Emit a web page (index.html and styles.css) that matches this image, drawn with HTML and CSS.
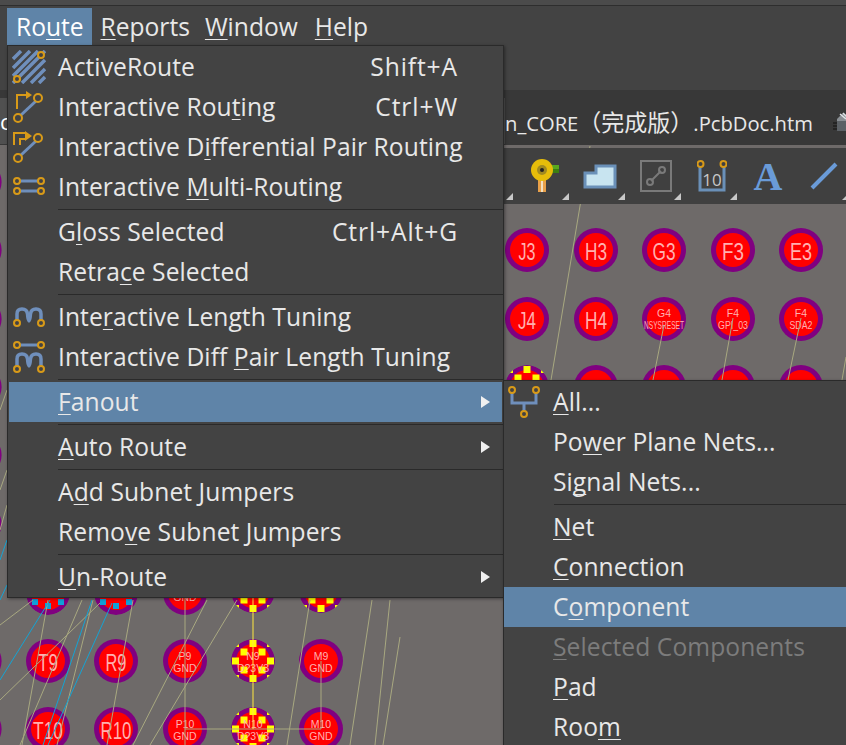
FILE: index.html

```html
<!DOCTYPE html>
<html lang="en">
<head>
  <meta charset="UTF-8" />
  <title>Route menu</title>
  <link rel="stylesheet" href="styles.css">
</head>
<body>
  <div class="top-strip"></div>
  <div class="menubar">
    <span class="menubar-item active">Ro<u>u</u>te</span>
    <span class="menubar-item reports"><u>R</u>eports</span>
    <span class="menubar-item"><u>W</u>indow</span>
    <span class="menubar-item"><u>H</u>elp</span>
  </div>
  <div class="tabs">
    <div class="tab-open">c</div>
    <div class="tab-name">n_CORE<span class="tab-cjk">（完成版）</span>.PcbDoc.htm</div>
    <svg class="tab-icon" width="16" height="24" viewBox="0 0 16 24">
      <path d="M4 8 L10 2 L16 6 V20 H4 Z" fill="#8a8f94"/>
      <path d="M4 10 H16 V20 H4 Z" fill="#5c6166"/>
      <path d="M7 3 L13 8 M10 2 L15 7" stroke="#dfe3e6" stroke-width="1.5"/>
      <path d="M0 12 H4 M0 15 H4 M0 18 H4" stroke="#111" stroke-width="1"/>
    </svg>
  </div>

  <div class="board">
    <svg class="board-svg" width="846" height="600" viewBox="0 145 846 600">
      <defs>
        <g id="pad">
          <circle r="22" fill="#800080"/>
          <circle r="17" fill="#ff0000"/>
        </g>
        <clipPath id="pad-clip"><circle r="22"/></clipPath>
        <g id="pad-yellow" clip-path="url(#pad-clip)" fill="#ffff00">
          <circle r="22" fill="#800080"/>
          <circle r="17" fill="#ff0000"/>
          <rect x="-3.5" y="-21" width="7" height="7"/>
          <rect x="-12.5" y="-12.5" width="7" height="7"/>
          <rect x="5.5" y="-12.5" width="7" height="7"/>
          <rect x="-21" y="-3.5" width="7" height="7"/>
          <rect x="14" y="-3.5" width="7" height="7"/>
          <rect x="-12.5" y="5.5" width="7" height="7"/>
          <rect x="5.5" y="5.5" width="7" height="7"/>
          <rect x="-3.5" y="14" width="7" height="7"/>
          <rect x="-21" y="-21" width="7" height="7"/>
          <rect x="14" y="-21" width="7" height="7"/>
          <rect x="-21" y="14" width="7" height="7"/>
          <rect x="14" y="14" width="7" height="7"/>
        </g>
        <g id="pad-blue" clip-path="url(#pad-clip)" fill="#12a0d8">
          <circle r="22" fill="#800080"/>
          <circle r="17" fill="#ff0000"/>
          <rect x="-16" y="6" width="6" height="6"/>
          <rect x="-3" y="10" width="6" height="6"/>
          <rect x="10" y="6" width="6" height="6"/>
        </g>
      </defs>

      <!-- left edge column -->
      <use href="#pad" x="-20.4" y="182"/>
      <use href="#pad" x="-20.4" y="250"/>
      <use href="#pad" x="-20.4" y="319"/>
      <use href="#pad" x="-20.4" y="387"/>
      <use href="#pad" x="-20.4" y="455"/>
      <use href="#pad" x="-20.4" y="524"/>
      <use href="#pad" x="-20.4" y="661"/>
      <use href="#pad" x="-20.4" y="729"/>

      <!-- rows 3 to 5 -->
      <use href="#pad" x="527" y="250"/>
      <use href="#pad" x="596" y="250"/>
      <use href="#pad" x="664" y="250"/>
      <use href="#pad" x="733" y="250"/>
      <use href="#pad" x="801" y="250"/>
      <use href="#pad" x="527" y="319"/>
      <use href="#pad" x="596" y="319"/>
      <use href="#pad" x="664" y="319"/>
      <use href="#pad" x="733" y="319"/>
      <use href="#pad" x="801" y="319"/>
      <use href="#pad-yellow" x="527" y="387"/>
      <use href="#pad" x="596" y="387"/>
      <use href="#pad" x="664" y="387"/>
      <use href="#pad" x="733" y="387"/>
      <use href="#pad" x="801" y="387"/>

      <text class="pad-big" x="527" y="260" textLength="17" lengthAdjust="spacingAndGlyphs">J3</text>
      <text class="pad-big" x="596" y="260" textLength="22" lengthAdjust="spacingAndGlyphs">H3</text>
      <text class="pad-big" x="664" y="260" textLength="23" lengthAdjust="spacingAndGlyphs">G3</text>
      <text class="pad-big" x="733" y="260" textLength="22" lengthAdjust="spacingAndGlyphs">F3</text>
      <text class="pad-big" x="801" y="260" textLength="22" lengthAdjust="spacingAndGlyphs">E3</text>
      <text class="pad-big" x="527" y="329" textLength="18" lengthAdjust="spacingAndGlyphs">J4</text>
      <text class="pad-big" x="596" y="329" textLength="22" lengthAdjust="spacingAndGlyphs">H4</text>
      <text class="pad-small" x="664" y="317">G4</text>
      <text class="pad-small" x="664" y="329" textLength="40" lengthAdjust="spacingAndGlyphs">NSYSRESET</text>
      <text class="pad-small" x="733" y="317">F4</text>
      <text class="pad-small" x="733" y="329" textLength="30" lengthAdjust="spacingAndGlyphs">GPI_03</text>
      <text class="pad-small" x="801" y="317">F4</text>
      <text class="pad-small" x="801" y="329" textLength="23" lengthAdjust="spacingAndGlyphs">SDA2</text>

      <!-- rows 8 to 10 -->
      <use href="#pad-blue" x="48" y="593"/>
      <use href="#pad-blue" x="116" y="593"/>
      <use href="#pad" x="185" y="593"/>
      <use href="#pad-yellow" x="253" y="591"/>
      <use href="#pad-yellow" x="321" y="591"/>
      <use href="#pad" x="48" y="661"/>
      <use href="#pad" x="116" y="661"/>
      <use href="#pad" x="185" y="661"/>
      <use href="#pad-yellow" x="253" y="661"/>
      <use href="#pad" x="321" y="661"/>
      <use href="#pad" x="48" y="729"/>
      <use href="#pad" x="116" y="729"/>
      <use href="#pad" x="185" y="729"/>
      <use href="#pad-yellow" x="253" y="729"/>
      <use href="#pad" x="321" y="729"/>

      <text class="pad-big" x="48" y="671" textLength="20" lengthAdjust="spacingAndGlyphs">T9</text>
      <text class="pad-big" x="116" y="671" textLength="21" lengthAdjust="spacingAndGlyphs">R9</text>
      <text class="pad-big" x="48" y="739" textLength="30" lengthAdjust="spacingAndGlyphs">T10</text>
      <text class="pad-big" x="116" y="739" textLength="31" lengthAdjust="spacingAndGlyphs">R10</text>
      <text class="pad-small" x="185" y="601">GND</text>
      <text class="pad-small" x="185" y="660">P9</text>
      <text class="pad-small" x="185" y="672">GND</text>
      <text class="pad-small" x="253" y="660">N9</text>
      <text class="pad-small" x="253" y="672">D?3V3</text>
      <text class="pad-small" x="321" y="660">M9</text>
      <text class="pad-small" x="321" y="672">GND</text>
      <text class="pad-small" x="185" y="728">P10</text>
      <text class="pad-small" x="185" y="740">GND</text>
      <text class="pad-small" x="253" y="728">N10</text>
      <text class="pad-small" x="253" y="740">D?3V3</text>
      <text class="pad-small" x="321" y="728">M10</text>
      <text class="pad-small" x="321" y="740">GND</text>

      <!-- ratsnest -->
      <g class="net">
        <path d="M590 146 L551 380"/>
        <path d="M664 325 L653 380"/>
        <path d="M733 318 L722 380"/>
        <path d="M801 318 L788 380"/>
        <path d="M846 357 L842 380"/>
        <path d="M185 598 V745"/>
        <path d="M321 661 V729"/>
        <path d="M185 729 H321"/>
        <path d="M207 600 L133 745"/>
        <path d="M237 600 L150 745"/>
        <path d="M310 600 L287 745"/>
        <path d="M372 600 L350 745"/>
        <path d="M390 600 L375 745"/>
        <path d="M400 637 L383 745"/>
        <path d="M133 600 L107 745"/>
        <path d="M33 600 L0 625"/>
        <path d="M48 600 L22 745"/>
        <path d="M82 600 L20 745"/>
        <path d="M93 600 L57 745"/>
        <path d="M100 603 L0 700"/>
        <path d="M7 470 L0 490"/>
        <path d="M7 505 L0 530"/>
        <path d="M7 390 L0 410"/>
      </g>
      <g class="net-cyan">
        <path d="M50 600 L0 680"/>
        <path d="M92 600 L43 745"/>
        <path d="M112 603 L48 745"/>
        <path d="M7 540 L0 560"/>
        <path d="M7 585 L0 600"/>
      </g>
      <path class="net-yellow" d="M253 598 V729"/>
    </svg>

    <div class="toolbar">
      <div class="tool"></div>
      <div class="tool">
        <svg width="32" height="34" viewBox="0 0 32 34">
          <rect x="22" y="6" width="9" height="4" fill="#5aa81e"/>
          <rect x="22" y="10" width="9" height="4" fill="#3c7e12"/>
          <rect x="10" y="20" width="8" height="13" fill="#e8a04a"/>
          <rect x="13" y="20" width="2" height="13" fill="#f4e0c0"/>
          <circle cx="14" cy="11" r="11" fill="#e6bd0a"/>
          <circle cx="14" cy="11" r="5" fill="#a08a20"/>
          <circle cx="14" cy="11" r="2" fill="#222"/>
        </svg>
      </div>
      <div class="tool">
        <svg width="34" height="26" viewBox="0 0 34 26">
          <path d="M2 24 V10 H13 V3 H32 V24 Z" fill="#c8e4f0" stroke="#6a90b8" stroke-width="3"/>
        </svg>
      </div>
      <div class="tool">
        <svg width="32" height="32" viewBox="0 0 32 32">
          <rect x="1" y="1" width="30" height="30" fill="none" stroke="#7a7a7a" stroke-width="2"/>
          <path d="M11 21 L21 11" stroke="#7a7a7a" stroke-width="2"/>
          <circle cx="10" cy="22" r="3" fill="none" stroke="#7a7a7a" stroke-width="2"/>
          <circle cx="22" cy="10" r="3" fill="none" stroke="#7a7a7a" stroke-width="2"/>
        </svg>
      </div>
      <div class="tool">
        <svg width="30" height="32" viewBox="0 0 30 32">
          <path d="M3 7 V30 H27 V7" fill="none" stroke="#6a90b8" stroke-width="3"/>
          <circle cx="3.5" cy="4" r="3" fill="none" stroke="#d89a18" stroke-width="2"/>
          <circle cx="26.5" cy="4" r="3" fill="none" stroke="#d89a18" stroke-width="2"/>
          <text class="dim-text" x="15" y="26">10</text>
        </svg>
      </div>
      <div class="tool plain"><span class="tool-a">A</span></div>
      <div class="tool">
        <svg width="28" height="28" viewBox="0 0 28 28">
          <path d="M2 26 L26 2" stroke="#6a9bd8" stroke-width="4"/>
        </svg>
      </div>
    </div>
  </div>

  <div class="menu main-menu">
    <div class="row">
      <span class="ico">
        <svg width="34" height="34" viewBox="0 0 34 34">
          <path d="M1 9 L9 1 M1 18 L18 1 M1 26 L26 1 M1 33 L33 1 M10 33 L33 10 M19 33 L33 19 M27 33 L33 27" stroke="#6f8fbc" stroke-width="3.5"/>
          <circle cx="29" cy="5" r="3" fill="#434343" stroke="#d89a18" stroke-width="2"/>
          <circle cx="5" cy="29" r="3" fill="#434343" stroke="#d89a18" stroke-width="2"/>
        </svg>
      </span>
      <span class="label">ActiveRoute</span><span class="keys">Shift+A</span>
    </div>
    <div class="row">
      <span class="ico">
        <svg width="34" height="34" viewBox="0 0 34 34">
          <path d="M9 25 L24 11" stroke="#6f8fbc" stroke-width="3"/>
          <path d="M5 19 V5 H15" fill="none" stroke="#d89a18" stroke-width="2"/>
          <path d="M14 1 L20 5 L14 9 Z" fill="#d89a18"/>
          <circle cx="6" cy="28" r="4" fill="none" stroke="#d89a18" stroke-width="2"/>
          <circle cx="26" cy="8" r="4" fill="none" stroke="#d89a18" stroke-width="2"/>
        </svg>
      </span>
      <span class="label">Interactive Rou<u>t</u>ing</span><span class="keys">Ctrl+W</span>
    </div>
    <div class="row">
      <span class="ico">
        <svg width="34" height="34" viewBox="0 0 34 34">
          <path d="M9 25 L24 11" stroke="#6f8fbc" stroke-width="3"/>
          <path d="M2 15 V3 H14 M8 15 V9 H14" fill="none" stroke="#d89a18" stroke-width="2"/>
          <path d="M13 1 L20 6 L13 11 Z" fill="#d89a18"/>
          <circle cx="6" cy="28" r="4" fill="none" stroke="#d89a18" stroke-width="2"/>
          <circle cx="26" cy="8" r="4" fill="none" stroke="#d89a18" stroke-width="2"/>
        </svg>
      </span>
      <span class="label">Interactive D<u>i</u>fferential Pair Routing</span>
    </div>
    <div class="row">
      <span class="ico">
        <svg width="34" height="34" viewBox="0 0 34 34">
          <path d="M8 11 H26 M8 21 H26" stroke="#6f8fbc" stroke-width="3"/>
          <circle cx="5" cy="11" r="3" fill="none" stroke="#d89a18" stroke-width="2"/>
          <circle cx="29" cy="11" r="3" fill="none" stroke="#d89a18" stroke-width="2"/>
          <circle cx="5" cy="21" r="3" fill="none" stroke="#d89a18" stroke-width="2"/>
          <circle cx="29" cy="21" r="3" fill="none" stroke="#d89a18" stroke-width="2"/>
        </svg>
      </span>
      <span class="label">Interactive <u>M</u>ulti-Routing</span>
    </div>
    <div class="sep"></div>
    <div class="row"><span class="ico"></span><span class="label">G<u>l</u>oss Selected</span><span class="keys">Ctrl+Alt+G</span></div>
    <div class="row"><span class="ico"></span><span class="label">Retra<u>c</u>e Selected</span></div>
    <div class="sep"></div>
    <div class="row">
      <span class="ico">
        <svg width="34" height="34" viewBox="0 0 34 34">
          <path d="M5 21 V14 Q5 9 10 9 Q15 9 15.5 14 Q16 21 17 21 Q18 21 18.5 14 Q19 9 24 9 Q29 9 29 14 V21" fill="none" stroke="#6f8fbc" stroke-width="3.5"/>
          <circle cx="5" cy="23" r="3" fill="#434343" stroke="#d89a18" stroke-width="2"/>
          <circle cx="29" cy="23" r="3" fill="#434343" stroke="#d89a18" stroke-width="2"/>
        </svg>
      </span>
      <span class="label">Inte<u>r</u>active Length Tuning</span>
    </div>
    <div class="row">
      <span class="ico">
        <svg width="34" height="34" viewBox="0 0 34 34">
          <path d="M8 5 H26" stroke="#6f8fbc" stroke-width="3"/>
          <path d="M5 27 V19 Q5 14 10 14 Q15 14 15.5 19 Q16 26 17 26 Q18 26 18.5 19 Q19 14 24 14 Q29 14 29 19 V27" fill="none" stroke="#6f8fbc" stroke-width="3.5"/>
          <circle cx="5" cy="5" r="3" fill="#434343" stroke="#d89a18" stroke-width="2"/>
          <circle cx="29" cy="5" r="3" fill="#434343" stroke="#d89a18" stroke-width="2"/>
          <circle cx="5" cy="29" r="3" fill="#434343" stroke="#d89a18" stroke-width="2"/>
          <circle cx="29" cy="29" r="3" fill="#434343" stroke="#d89a18" stroke-width="2"/>
        </svg>
      </span>
      <span class="label">Interactive Diff <u>P</u>air Length Tuning</span>
    </div>
    <div class="sep"></div>
    <div class="row hover"><span class="ico"></span><span class="label"><u>F</u>anout</span><span class="arrow"></span></div>
    <div class="sep"></div>
    <div class="row"><span class="ico"></span><span class="label"><u>A</u>uto Route</span><span class="arrow"></span></div>
    <div class="sep"></div>
    <div class="row"><span class="ico"></span><span class="label">A<u>d</u>d Subnet Jumpers</span></div>
    <div class="row"><span class="ico"></span><span class="label">Remo<u>v</u>e Subnet Jumpers</span></div>
    <div class="sep"></div>
    <div class="row"><span class="ico"></span><span class="label"><u>U</u>n-Route</span><span class="arrow"></span></div>
  </div>

  <div class="menu sub-menu">
    <div class="row">
      <span class="ico">
        <svg width="34" height="34" viewBox="0 0 34 34">
          <path d="M4 6 V18 H28 V6 M16 18 V27" fill="none" stroke="#6f8fbc" stroke-width="3"/>
          <circle cx="4" cy="5" r="3" fill="#434343" stroke="#d89a18" stroke-width="2"/>
          <circle cx="28" cy="5" r="3" fill="#434343" stroke="#d89a18" stroke-width="2"/>
          <circle cx="16" cy="29" r="3" fill="#434343" stroke="#d89a18" stroke-width="2"/>
        </svg>
      </span>
      <span class="label"><u>A</u>ll...</span>
    </div>
    <div class="row"><span class="ico"></span><span class="label">Po<u>w</u>er Plane Nets...</span></div>
    <div class="row"><span class="ico"></span><span class="label">Si<u>g</u>nal Nets...</span></div>
    <div class="sep"></div>
    <div class="row"><span class="ico"></span><span class="label"><u>N</u>et</span></div>
    <div class="row"><span class="ico"></span><span class="label"><u>C</u>onnection</span></div>
    <div class="row hover"><span class="ico"></span><span class="label">C<u>o</u>mponent</span></div>
    <div class="row disabled"><span class="ico"></span><span class="label"><u>S</u>elected Components</span></div>
    <div class="row"><span class="ico"></span><span class="label"><u>P</u>ad</span></div>
    <div class="row"><span class="ico"></span><span class="label">Roo<u>m</u></span></div>
  </div>
</body>
</html>
```

FILE: styles.css

```css
html, body {
  margin: 0;
  height: 745px;
  overflow: hidden;
}
body {
  position: relative;
  background: #434343;
  color: #e8e8e8;
  font-family: 'Open Sans', 'Noto Sans CJK SC', sans-serif;
  font-size: 24.6px;
  letter-spacing: 0.08px;
}
u {
  text-decoration-thickness: 1px;
  text-decoration-skip-ink: none;
  text-underline-offset: 3px;
}
.top-strip {
  height: 5px;
  background: #4b4b4b;
  border-bottom: 1px solid #2e2e2e;
}
.menubar {
  height: 84px;
  display: flex;
  align-items: flex-start;
  padding: 2px 0 0 7px;
  box-sizing: border-box;
}
.menubar-item {
  height: 37px;
  line-height: 37px;
  padding: 0 8.5px;
  letter-spacing: 0;
}
.menubar-item.reports {
  padding-right: 6.5px;
}
.menubar-item.active {
  width: 85px;
  box-sizing: border-box;
  padding: 0 0 0 9px;
  background: #5f84a8;
  color: #fff;
}
.tabs {
  height: 55px;
  display: flex;
  background: #383838;
  position: relative;
}
.tab-open {
  width: 505px;
  height: 46px;
  margin-top: 8px;
  line-height: 46px;
  background: #505050;
  color: #fff;
  font-size: 22px;
  flex-shrink: 0;
}
.tab-name {
  line-height: 64px;
  font-size: 20.2px;
  letter-spacing: 0;
  white-space: nowrap;
  flex-shrink: 0;
}
.tab-cjk {
  font-size: 23px;
}
.tab-icon {
  margin: 21px 0 0 20px;
  flex-shrink: 0;
}
.board {
  height: 600px;
  position: relative;
  background: #6e6a69;
}
.board-svg {
  display: block;
}
.net path {
  stroke: #a8a880;
  fill: none;
}
.net-cyan path {
  stroke: #14a4d4;
  fill: none;
}
.net-yellow {
  stroke: #ffe840;
}
.pad-big, .pad-small {
  font-family: 'Liberation Sans', sans-serif;
  fill: #ffb0b0;
  text-anchor: middle;
  letter-spacing: 0;
}
.pad-big {
  font-size: 24px;
}
.pad-small {
  font-size: 10.5px;
}
.toolbar {
  position: absolute;
  top: 3px;
  left: 457px;
  width: 392px;
  height: 56px;
  display: flex;
  background: #404040;
}
.tool {
  width: 56px;
  flex-shrink: 0;
  position: relative;
  display: flex;
  align-items: center;
  justify-content: center;
  padding-left: 6px;
  box-sizing: border-box;
}
.tool::after {
  content: "";
  position: absolute;
  right: 0;
  bottom: 4px;
  border-style: solid;
  border-width: 0 0 7px 7px;
  border-color: transparent transparent #c8c8c8 transparent;
}
.tool.plain::after {
  display: none;
}
.tool-a {
  font-family: 'Liberation Serif', serif;
  font-weight: bold;
  font-size: 40px;
  color: #6a9bd8;
}
.dim-text {
  font-size: 17px;
  fill: #c8c8c8;
  text-anchor: middle;
}
.menu {
  position: absolute;
  background: #434343;
  border: 1px solid #2a2a2a;
  box-sizing: border-box;
  box-shadow: 1px 1px 3px rgba(0,0,0,0.4);
  padding-top: 1px;
}
.main-menu {
  top: 45px;
  left: 7px;
  width: 497px;
  height: 553px;
}
.sub-menu {
  top: 380px;
  left: 503px;
  width: 350px;
  height: 380px;
}
.sub-menu .row {
  margin: 0;
}
.sub-menu .ico {
  padding-left: 4px;
}
.row {
  height: 40px;
  display: flex;
  align-items: center;
  margin: 0 1px;
  padding-bottom: 2px;
  box-sizing: border-box;
}
.ico {
  width: 49px;
  flex-shrink: 0;
  display: flex;
  padding-left: 3px;
  box-sizing: border-box;
  margin-bottom: -2px;
}
.label {
  flex: 1;
  white-space: nowrap;
}
.keys {
  margin-right: 44px;
  letter-spacing: 0.9px;
}
.row.hover {
  background: #5f84a8;
}
.row.disabled {
  color: #7c7c7c;
}
.arrow {
  margin-right: 12px;
  margin-bottom: -2px;
  border-style: solid;
  border-width: 6px 0 6px 9px;
  border-color: transparent transparent transparent #f0f0f0;
}
.sep {
  height: 1px;
  margin: 2px 0 2px 50px;
  background: #2a2a2a;
}
```
